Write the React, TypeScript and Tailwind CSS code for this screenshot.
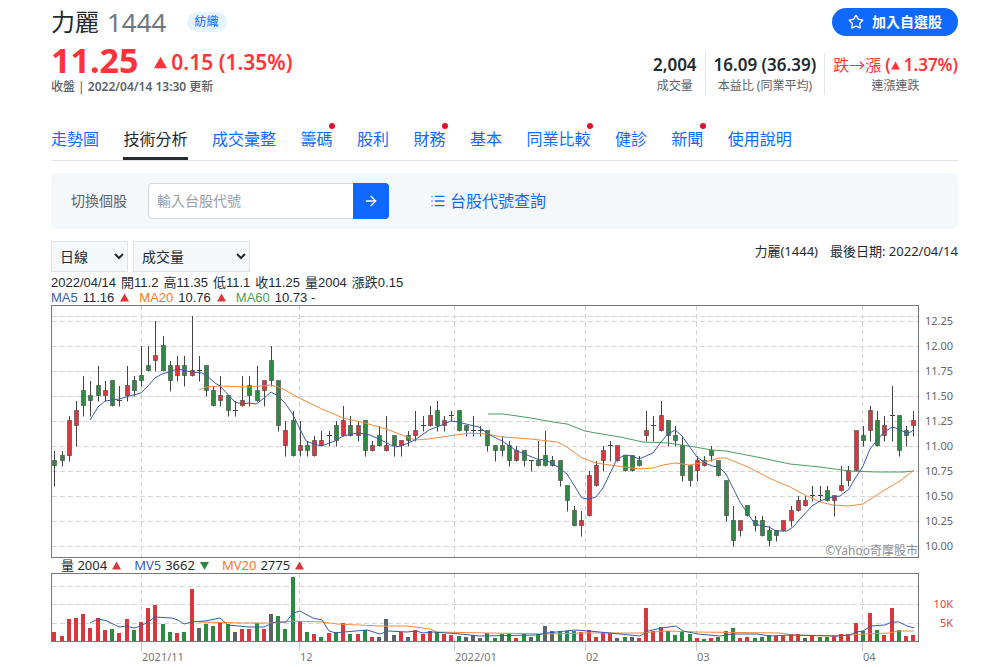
import { ArrowRight, List, Star } from 'lucide-react'

const tabs = [
  { label: '走勢圖' },
  { label: '技術分析', active: true },
  { label: '成交彙整' },
  { label: '籌碼', dot: true },
  { label: '股利' },
  { label: '財務', dot: true },
  { label: '基本' },
  { label: '同業比較', dot: true },
  { label: '健診' },
  { label: '新聞', dot: true },
  { label: '使用說明' },
]

const quote = ['2022/04/14', '開11.2', '高11.35', '低11.1', '收11.25', '量2004', '漲跌0.15']

// high, body top, body bottom, low: cents above 10.00, then r(ed) / g(reen) / d(oji)
const candles = `
95 85 80 60 g|95 90 85 80 g|130 125 90 85 r|145 135 120 100 r|170 155 140 130 g|165 150 145 130 g
180 160 150 145 g|165 155 150 145 r|165 165 140 140 g|160 145 145 140 d|180 160 150 145 r|170 165 155 150 g
200 170 165 160 g|200 180 175 175 g|225 190 185 175 r|210 200 175 175 g|185 180 165 155 g|190 180 170 165 r
190 180 170 160 g|230 175 170 170 r|190 175 175 165 d|180 180 155 150 g|160 155 140 140 g|170 150 145 140 r
150 150 135 130 g|145 135 135 130 d|170 145 140 140 r|170 160 150 140 g|180 155 145 145 g|165 165 155 140 r
200 185 165 160 g|165 165 120 115 g|125 115 100 90 r|135 125 90 90 g|125 100 95 90 r|105 100 95 90 g
110 105 90 90 r|115 105 100 100 r|115 110 110 100 d|125 120 105 100 g|140 125 110 110 r|130 120 110 110 g
125 120 110 105 r|125 125 95 90 g|105 100 95 95 r|120 110 100 100 g|130 100 95 95 r|110 110 100 90 g
105 105 100 90 r|115 110 105 100 g|135 115 110 105 r|130 120 120 115 d|140 130 120 120 r|145 135 120 115 g
130 125 120 115 r|135 130 130 125 d|135 135 115 115 g|120 120 115 110 g|130 115 115 110 d|120 115 115 110 d
115 115 100 95 g|100 100 95 85 g|110 100 95 90 g|105 100 85 80 g|100 95 85 85 r|95 95 85 80 g
85 85 85 75 d|105 85 80 80 g|115 90 80 80 g|90 85 80 80 g|85 85 65 60 g|60 60 45 35 g
40 35 20 20 g|35 25 20 10 r|75 70 30 30 r|85 80 60 60 r|100 95 85 75 r|105 100 100 85 d
100 100 85 85 r|90 90 75 75 g|90 90 75 75 g|90 85 80 80 g|135 115 110 105 r|130 120 120 105 d
145 130 115 115 r|125 125 110 100 g|120 110 105 100 g|110 100 70 65 g|80 80 65 60 g|90 85 75 65 r
90 85 80 80 r|100 95 90 85 g|85 85 70 70 g|65 65 30 25 g|40 25 5 0 g|25 25 15 10 r
40 40 30 30 g|30 25 20 15 g|30 25 10 10 g|20 15 5 0 g|16 15 10 5 g|25 25 15 15 r
40 35 25 20 r|50 45 35 35 r|50 45 40 40 r|60 50 50 45 d|60 50 50 45 d|60 55 45 45 g
50 50 45 30 r|80 60 55 55 r|80 75 65 60 r|115 115 75 75 r|120 110 105 100 g|140 135 115 105 r
135 125 100 100 g|130 120 110 105 r|160 130 130 105 d|130 130 95 90 g|120 115 110 100 g|135 125 120 110 r`
  .trim()
  .split(/[|\n]/)
  .map((row) => {
    const [high, top, bottom, low, kind] = row.split(' ')
    return { high: +high, top: +top, bottom: +bottom, low: +low, kind }
  })

// bar height + r(ed) / g(reen) / n(eutral)
const volumes = `
9r 5r 22r 23r 27r 13r 23r 11r 12g 8r 22r 11g 19r 33r 36r 17g 9g 8r 9g 52r
13n 17g 15g 18r 17g 9n 12r 12r 18g 12r 27n 25g 12g 64g 20r 9g 7r 4g 8r 9g
18r 7g 7r 11g 4r 4n 22n 6n 9r 4n 11r 7r 10r 9g 7r 6r 5g 4n 6n 3n
8g 3g 7n 8g 3r 7g 4n 7g 15n 10n 10g 10g 10g 9r 11r 4r 8r 8r 3n 4g
4n 3r 33r 10r 14r 10g 6g 10g 7g 3r 2g 3r 4g 10g 13g 3r 4r 3g 4g 6g
5r 5r 7r 7r 3n 5r 4g 4g 5r 7r 7r 18r 10g 28r 11g 6r 33r 11g 5r 6r`
  .trim()
  .split(/\s+/)
  .map((v) => ({ height: parseInt(v, 10), kind: v.slice(-1) }))

const fills: Record<string, string> = { r: '#d9363e', g: '#2d8a43', n: '#5b636a', d: '#5b636a' }

const ma5 =
  '90,420 98,407 105,401 119,399 126,397 141,393 148,386 155,378 162,374 169,372 177,369 192,372 202,373 206,375 215,383 220,386 235,402 242,404 249,403 256,404 263,399 271,392 278,396 285,403 292,413 299,427 306,441 314,444 322,446 329,443 335,441 343,436 358,433 370,435 379,439 395,447 401,446 415,440 429,430 437,427 451,421 458,422 470,425 479,427 488,434 502,441 517,451 537,459 546,460 558,467 567,474 582,498 589,499 596,497 603,488 617,459 625,455 632,456 639,459 653,453 661,442 668,434 675,430 682,436 697,457 705,463 712,466 719,467 726,474 733,488 740,502 748,514 755,524 762,526 769,527 776,531 787,531 793,527 800,519 812,506 820,501 828,498 840,496 849,489 856,477 863,466 870,449 883,433 892,427 899,429 906,433 911,432 914,429'
const ma20 =
  '199,390 206,387 220,386 249,387 271,385 278,387 285,390 299,398 322,409 343,418 365,423 386,429 402,435 415,440 428,439 455,435 470,433 487,434 503,437 531,439 557,442 567,447 582,458 596,463 617,466 640,469 653,468 663,465 675,463 690,465 705,462 719,458 726,458 748,467 769,478 790,487 807,496 820,502 833,505 849,506 863,504 883,491 900,481 914,470'
const ma60 =
  '488,414 503,414 531,418 553,422 567,424 585,431 596,433 620,437 643,442 668,443 695,447 712,450 726,451 757,457 790,464 820,467 849,471 877,472 903,472 914,471'
const mv5 =
  '90,623 98,619 107,621 119,627 126,626 134,628 141,626 148,622 155,617 172,618 178,620 184,624 192,622 205,621 220,618 228,625 249,627 264,627 275,622 286,622 293,613 300,611 313,618 322,620 329,631 336,633 344,632 367,630 380,634 388,631 407,632 416,631 423,633 433,632 460,634 480,636 537,635 547,633 575,630 589,631 610,633 640,636 648,631 662,628 676,626 683,631 698,634 720,636 733,634 757,634 770,636 790,635 837,636 850,635 856,632 863,631 871,626 885,625 892,622 899,622 907,626 914,628'
const mv20 =
  '199,622 242,623 275,623 293,621 322,622 330,623 337,624 380,626 407,626 430,629 437,632 487,633 553,634 583,633 640,633 667,631 697,632 780,633 793,635 837,636 863,634 890,633 897,631 914,631'

const months = [
  { x: 141, label: '2021/11' },
  { x: 299, label: '12' },
  { x: 454, label: '2022/01' },
  { x: 585, label: '02' },
  { x: 696, label: '03' },
  { x: 862, label: '04' },
]
const prices = [12.25, 12, 11.75, 11.5, 11.25, 11, 10.75, 10.5, 10.25, 10]

const candleX = (i: number) => Math.round(54.4 + i * 7.218)
const priceY = (cents: number) => 546 - cents

function Triangle({ className, down }: { className: string; down?: boolean }) {
  return (
    <svg viewBox="0 0 10 10" className={className} fill="currentColor" aria-hidden="true">
      <path d={down ? 'M0 1h10L5 10z' : 'M0 9.500h10L5 .5z'} />
    </svg>
  )
}

function PriceChart() {
  return (
    <svg viewBox="51 305 907 253" className="block h-auto w-full">
      <g stroke="#d4d4d4" strokeDasharray="5 3">
        <path d="M52 316.500H918" />
        {prices.map((p) => (
          <path key={p} d={`M52 ${priceY((p - 10) * 100) + 0.5}H918`} />
        ))}
        {months.map((m) => (
          <path key={m.x} d={`M${m.x + 0.5} 306V557`} />
        ))}
      </g>
      <text x="918" y="555" textAnchor="end" className="fill-[#8f8f8f] text-xs">
        ©Yahoo奇摩股市
      </text>
      {candles.map((c, i) => {
        const x = candleX(i)
        const top = priceY(c.top)
        return (
          <g key={i} stroke="#444">
            <path d={`M${x + 0.5} ${priceY(c.high)}V${priceY(c.low) + 0.5}`} />
            {c.kind === 'd' ? (
              <path d={`M${x - 2} ${top - 0.5}h5`} />
            ) : (
              <rect
                x={x - 1.5}
                y={top - 0.5}
                width="4"
                height={c.top - c.bottom}
                fill={fills[c.kind]}
                strokeOpacity="0.6"
              />
            )}
          </g>
        )
      })}
      <g fill="none" strokeLinejoin="round">
        <polyline points={ma60} stroke="#4a9e5c" />
        <polyline points={ma20} stroke="#f58b3c" />
        <polyline points={ma5} stroke="#3b5ba9" />
      </g>
      <rect x="51.5" y="305.5" width="867" height="252" fill="none" stroke="#777" />
      {prices.map((p) => (
        <text key={p} x="925" y={priceY((p - 10) * 100) + 4} className="fill-[#666] text-[11px]">
          {p.toFixed(2)}
        </text>
      ))}
    </svg>
  )
}

function VolumeChart() {
  return (
    <svg viewBox="51 573 907 92" className="block h-auto w-full">
      <g stroke="#d4d4d4" strokeDasharray="5 3">
        <path d="M52 586.500H918M52 604.500H918M52 623.500H918" />
        {months.map((m) => (
          <path key={m.x} d={`M${m.x + 0.5} 574V641`} />
        ))}
      </g>
      {volumes.map((v, i) => (
        <rect key={i} x={candleX(i) - 2} y={641 - v.height} width="4" height={v.height} fill={fills[v.kind]} />
      ))}
      <g fill="none" strokeLinejoin="round">
        <polyline points={mv20} stroke="#f58b3c" />
        <polyline points={mv5} stroke="#3b5ba9" />
      </g>
      <rect x="51.5" y="573.5" width="867" height="68" fill="none" stroke="#777" />
      {months.map((m) => (
        <g key={m.x}>
          <path d={`M${m.x + 0.5} 642V651`} stroke="#ccc" />
          <text x={m.x + 1} y="661" className="fill-[#777] text-[11px]">
            {m.label}
          </text>
        </g>
      ))}
      <g className="fill-[#d0454c] text-[11px]" textAnchor="end">
        <text x="953" y="608">10K</text>
        <text x="953" y="627">5K</text>
      </g>
    </svg>
  )
}

export default function App() {
  return (
    <main className="bg-white pl-[51px] pr-[42px] pt-2 font-['Noto_Sans','Noto_Sans_CJK_TC',sans-serif] text-[#232a31]">
      <header>
        <div className="flex h-7 items-center justify-between">
          <div className="flex items-center">
            <h1 className="text-2xl leading-7">力麗</h1>
            <span className="ml-2 text-[26px] leading-7 text-[#6e7780]">1444</span>
            <a href="#" className="ml-5 rounded-full bg-[#e5f3fd] px-2 text-xs leading-5 text-[#0f69ff]">
              紡織
            </a>
          </div>
          <button className="flex h-7 items-center gap-2 rounded-full bg-[#0f69ff] px-4 text-sm font-bold text-white">
            <Star className="size-4" />
            加入自選股
          </button>
        </div>

        <div className="mt-2 flex items-end justify-between">
          <div>
            <div className="flex h-8 items-center text-[#ff333a]">
              <span className="text-[34px] font-bold leading-8">11.25</span>
              <Triangle className="ml-4 mt-1 size-[13px]" />
              <span className="ml-1 mt-1 text-[21px] font-semibold leading-7">0.15 (1.35%)</span>
            </div>
            <p className="mt-[3px] text-xs font-medium leading-4 text-[#5b636a]">
              收盤 | <span className="font-semibold">2022/04/14 13:30</span> 更新
            </p>
          </div>
          <dl className="flex divide-x divide-[#e0e4e9] text-center">
            <div className="flex flex-col-reverse pr-2">
              <dt className="text-xs leading-[18px] text-[#5b636a]">成交量</dt>
              <dd className="text-[17px] font-semibold leading-6">2,004</dd>
            </div>
            <div className="flex flex-col-reverse px-2">
              <dt className="text-xs leading-[18px] text-[#5b636a]">本益比 (同業平均)</dt>
              <dd className="text-[17px] font-semibold leading-6">16.09 (36.39)</dd>
            </div>
            <div className="flex flex-col-reverse pl-2">
              <dt className="text-xs leading-[18px] text-[#5b636a]">連漲連跌</dt>
              <dd className="flex items-center gap-1 text-base leading-6 text-[#ff333a]">
                跌→漲
                <span className="flex items-center text-[17px] font-semibold">
                  (<Triangle className="mr-1 size-[9px]" />
                  1.37%)
                </span>
              </dd>
            </div>
          </dl>
        </div>
      </header>

      <nav className="mt-6 border-b border-[#e0e4e9]">
        <ul className="flex max-w-[741px] justify-between">
          {tabs.map((tab) => (
            <li key={tab.label} className="relative">
              <a
                href="#"
                className={
                  tab.active
                    ? 'block h-[41px] border-b-[3px] border-[#232a31] text-base leading-[41px]'
                    : 'block h-[41px] text-base leading-[41px] text-[#0f69ff]'
                }
              >
                {tab.label}
              </a>
              {tab.dot && <span className="absolute right-[-3px] top-1 size-[6px] rounded-full bg-[#e0102b]" />}
            </li>
          ))}
        </ul>
      </nav>

      <form className="mt-3 flex h-14 items-center rounded-md bg-[#f5f8fa] px-5">
        <label htmlFor="symbol" className="text-sm text-[#5b636a]">
          切換個股
        </label>
        <div className="ml-[21px] flex h-9">
          <input
            id="symbol"
            placeholder="輸入台股代號"
            className="w-[205px] rounded-l border border-r-0 border-[#d5dae0] bg-white px-2 text-sm placeholder:text-[#979ea8]"
          />
          <button
            type="button"
            aria-label="查詢"
            className="flex w-9 items-center justify-center rounded-r bg-[#0f69ff] text-white"
          >
            <ArrowRight className="size-4" />
          </button>
        </div>
        <a href="#" className="ml-[41px] flex items-center gap-1 text-base text-[#0f69ff]">
          <List className="size-4" />
          台股代號查詢
        </a>
      </form>

      <section className="mt-3">
        <div className="flex items-start justify-between">
          <div className="flex gap-[5px] text-sm">
            <select aria-label="週期" className="h-[31px] w-[77px] border border-[#e0e4e9] bg-[#f5f8fa] px-1">
              <option>日線</option>
            </select>
            <select aria-label="指標" className="h-[31px] w-[117px] border border-[#e0e4e9] bg-[#f5f8fa] px-1">
              <option>成交量</option>
            </select>
          </div>
          <p className="flex gap-3 text-[13px] leading-5">
            <span>力麗(1444)</span>
            <span>最後日期: 2022/04/14</span>
          </p>
        </div>
        <p className="mt-[3px] flex h-[15px] gap-[5px] whitespace-nowrap font-['Liberation_Sans','Noto_Sans_CJK_TC',sans-serif] text-[13px] leading-[15px]">
          {quote.map((part) => (
            <span key={part}>{part}</span>
          ))}
        </p>
        <p className="flex h-[15px] items-center gap-[5px] whitespace-nowrap font-['Liberation_Sans','Noto_Sans_CJK_TC',sans-serif] text-[13px] leading-[15px]">
          <span className="text-[#3b5ba9]">MA5</span> 11.16
          <Triangle className="mx-px size-[9px] text-[#d9363e]" />
          <span className="ml-1 text-[#f5791f]">MA20</span> 10.76
          <Triangle className="mx-px size-[9px] text-[#d9363e]" />
          <span className="ml-1 text-[#4a9e5c]">MA60</span> 10.73 -
        </p>
        <PriceChart />
        <p className="flex h-[15px] items-center gap-1 whitespace-nowrap pl-[10px] text-[13px] leading-[15px]">
          量 2004
          <Triangle className="mx-px size-[9px] text-[#d9363e]" />
          <span className="ml-2 text-[#3b5ba9]">MV5</span> 3662
          <Triangle down className="mx-px size-[9px] text-[#2d8a43]" />
          <span className="ml-2 text-[#f5791f]">MV20</span> 2775
          <Triangle className="mx-px size-[9px] text-[#d9363e]" />
        </p>
        <VolumeChart />
      </section>
    </main>
  )
}
